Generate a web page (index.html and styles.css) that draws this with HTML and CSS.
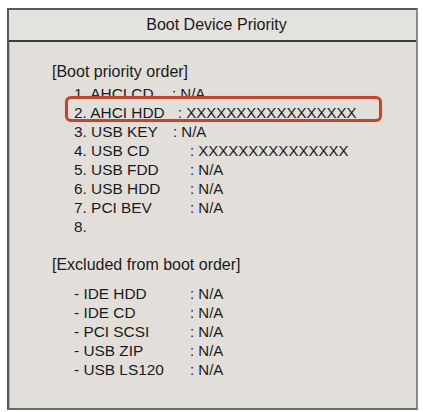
FILE: index.html
```html
<!DOCTYPE html>
<html>
<head>
<meta charset="utf-8">
<link rel="stylesheet" href="styles.css">
</head>
<body>
<div class="panel">
  <div class="panel-head">Boot Device Priority</div>
  <div class="panel-body">
    <div class="section">
      <div class="section-title">[Boot priority order]</div>
      <div class="rows">
        <div class="row"><span class="label w1">1. AHCI CD</span><span class="value">: N/A</span></div>
        <div class="row selected"><span class="label w2">2. AHCI HDD</span><span class="value">: XXXXXXXXXXXXXXXXX</span><span class="highlight"></span></div>
        <div class="row"><span class="label w3">3. USB KEY</span><span class="value">: N/A</span></div>
        <div class="row"><span class="label">4. USB CD</span><span class="value">: XXXXXXXXXXXXXXX</span></div>
        <div class="row"><span class="label">5. USB FDD</span><span class="value">: N/A</span></div>
        <div class="row"><span class="label">6. USB HDD</span><span class="value">: N/A</span></div>
        <div class="row"><span class="label">7. PCI BEV</span><span class="value">: N/A</span></div>
        <div class="row"><span class="label">8.</span></div>
      </div>
    </div>
    <div class="section excluded">
      <div class="section-title">[Excluded from boot order]</div>
      <div class="rows">
        <div class="row"><span class="label">- IDE HDD</span><span class="value">: N/A</span></div>
        <div class="row"><span class="label">- IDE CD</span><span class="value">: N/A</span></div>
        <div class="row"><span class="label">- PCI SCSI</span><span class="value">: N/A</span></div>
        <div class="row"><span class="label">- USB ZIP</span><span class="value">: N/A</span></div>
        <div class="row"><span class="label">- USB LS120</span><span class="value">: N/A</span></div>
      </div>
    </div>
  </div>
</div>
</body>
</html>
```
FILE: styles.css
```css
html, body {
  margin: 0;
  padding: 0;
  background: #ffffff;
}
body {
  font-family: "Liberation Sans", Arial, sans-serif;
  color: #1a1a1a;
}
.panel {
  box-sizing: border-box;
  margin: 8px 0 0 7px;
  width: 411px;
  height: 402px;
  border: 2px solid #585858;
  border-right-color: #8a8a8a;
  border-bottom-color: #6a6a6a;
  background: #e2dfdb;
  box-shadow: inset 1px 1px 0 #b8b6b2;
  display: flex;
  flex-direction: column;
}
.panel-head {
  height: 30px;
  line-height: 30px;
  text-align: center;
  font-size: 16px;
  padding-left: 8px;
  border-bottom: 2px solid #3c3c3c;
  background: #e4e2de;
}
.panel-body {
  padding: 20px 0 0 43px;
  font-size: 15px;
  line-height: 19px;
}
.section-title {
  font-size: 16px;
  margin-bottom: 3px;
}
.excluded {
  margin-top: 19px;
}
.excluded .section-title {
  margin-bottom: 10px;
}
.rows {
  margin-left: 22px;
}
.row {
  position: relative;
  display: flex;
  white-space: pre;
}
.label {
  display: inline-block;
  width: 116px;
  font-size: 15.4px;
}
.label.w1 { width: 98px; }
.label.w2 { width: 104px; }
.label.w3 { width: 99px; }
.highlight {
  position: absolute;
  left: -9px;
  top: -7px;
  width: 317px;
  height: 26px;
  box-sizing: border-box;
  border: 3px solid #c1462e;
  border-radius: 6px;
  box-shadow: 0 0 1px #e09080;
}
```
